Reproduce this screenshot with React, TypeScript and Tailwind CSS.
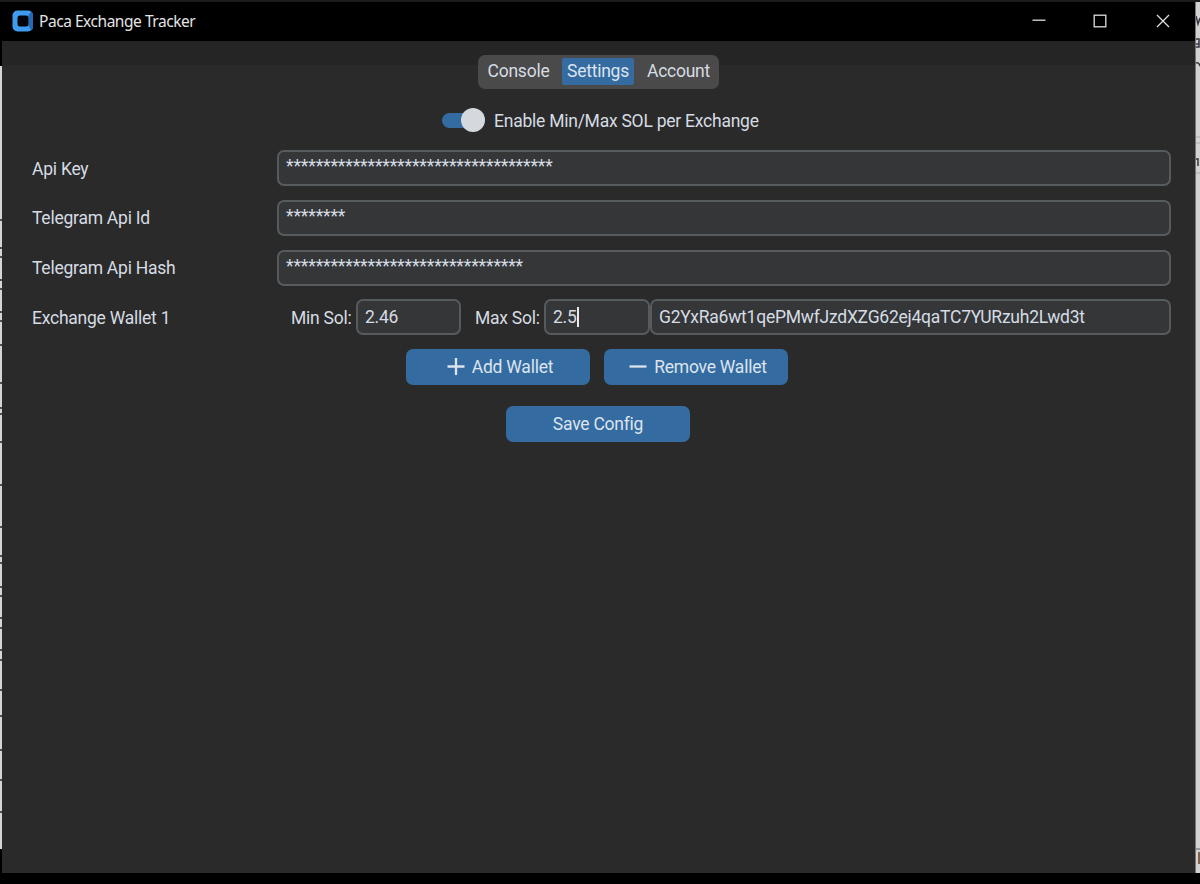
import { ReactNode } from "react";
import clsx from "clsx";

interface Field {
  label: string;
  value: string;
}

const tabs = [
  { name: "Console", width: "w-[80px] pl-px" },
  { name: "Settings", width: "ml-[4px] w-[72px]" },
  { name: "Account", width: "w-[88px] pl-px" },
];

const fields: Field[] = [
  { label: "Api Key", value: "*".repeat(36) },
  { label: "Telegram Api Id", value: "*".repeat(8) },
  { label: "Telegram Api Hash", value: "*".repeat(32) },
];

// y positions of the glyph edges of the document behind the window
const leftMarks = [219, 247, 256, 279, 288, 311, 320, 344, 382, 407, 413, 441, 484, 526, 555, 562, 586, 595, 617, 627, 649, 659, 689, 715, 749, 779, 811];

function Logo() {
  return (
    <svg width="22" height="22" viewBox="0 0 22 22" className="mb-[2px] ml-px shrink-0">
      <rect x="0.5" y="0.5" width="20.500" height="21" rx="5" fill="#3f9bee" />
      <path d="M16.500 5l3-3.500q1.500 1.500 1.500 3.500v12q0 2.500-1.500 3.500l-3-4.500z" fill="#2568b3" />
      <rect x="5.500" y="5.500" width="11" height="11" rx="2.500" fill="#02060b" />
    </svg>
  );
}

function TitleBar() {
  return (
    <header className="flex h-[39px] shrink-0 items-center bg-black pl-[9px]">
      <Logo />
      <h1 className="mb-[2px] ml-[5px] font-['Noto_Sans',sans-serif] text-[15.5px] leading-5 tracking-[-0.46px] text-[#e4e4e4]">
        Paca Exchange Tracker
      </h1>
      <svg width="140" height="16" viewBox="0 0 140 16" className="mb-[2px] ml-auto mr-[24px]" fill="none" stroke="#dedede" strokeWidth="1.300">
        <path d="M1.500 7.200h13" />
        <rect x="63.200" y="2.200" width="11.600" height="11.600" />
        <path d="M126 2l12 12M138 2L126 14" />
      </svg>
    </header>
  );
}

function Entry({ className, children }: { className?: string; children: ReactNode }) {
  return (
    <div className={clsx("flex h-9 items-center rounded-[7px] border-2 border-[#565b5e] bg-[#343638] pl-[7px]", className)}>
      {children}
    </div>
  );
}

function Button({ children }: { children: ReactNode }) {
  return (
    <button className="flex h-9 w-[184px] items-center justify-center rounded-[7px] bg-[#346ba1] text-[#dce4ee]">
      {children}
    </button>
  );
}

export default function App() {
  return (
    <div className="flex h-[884px] w-[1200px] flex-col overflow-hidden bg-black font-['Roboto',sans-serif] text-[17.500px] leading-5 tracking-[-0.240px] text-[#d6dce3]">
      <div className="h-[2px] shrink-0 bg-[#1c1c1c]" />
      <div className="flex h-[871px]">
        <div className="relative w-[2px] shrink-0 bg-black pt-[64px]">
          <div className="h-[783px] bg-[#d5d5d5]" />
          {leftMarks.map((y) => (
            <span key={y} className="absolute left-0 h-[2px] w-[2px] bg-[#4d5259]" style={{ top: y - 2 }} />
          ))}
        </div>

        <main className="flex w-[1193px] shrink-0 flex-col bg-[#2a2a2a]">
          <TitleBar />
          <div className="h-[24px] shrink-0 bg-[#252525]" />

          {/* Tab switcher straddles the darker strip */}
          <nav className="relative -mt-[10px] ml-[476px] flex h-[34px] w-[241px] items-center rounded-[7px] bg-[#4a4a4a]">
            {tabs.map((tab) => (
              <button
                key={tab.name}
                className={clsx(
                  "mb-px h-[27px] shrink-0 pb-px text-center",
                  tab.width,
                  tab.name === "Settings" && "rounded-[2px] bg-[#346ba1] text-[#dce4ee]",
                )}
              >
                {tab.name}
              </button>
            ))}
          </nav>

          <div className="ml-[440px] mt-[19px] flex h-6 items-center">
            <div className="flex h-[15px] w-[43px] items-center justify-end rounded-full bg-[#346ba1]">
              <span className="h-6 w-6 shrink-0 rounded-full bg-[#d5d9de]" />
            </div>
            <span className="ml-[9px] pt-px">Enable Min/Max SOL per Exchange</span>
          </div>

          <div className="mt-[18px] flex flex-col gap-[13.800px] pl-[30px] pr-[24px]">
            {fields.map((field) => (
              <div key={field.label} className="flex items-center">
                <label className="w-[245px] pt-px">{field.label}</label>
                <Entry className="flex-1">
                  <span className="mb-[4px] tracking-[-0.130px]">{field.value}</span>
                </Entry>
              </div>
            ))}
            <div className="flex items-center">
              <label className="w-[259px] pt-px">Exchange Wallet 1</label>
              <label className="w-[65px] pt-px">Min Sol:</label>
              <Entry className="w-[105px]">2.46</Entry>
              <label className="ml-[14px] w-[69px] pt-px">Max Sol:</label>
              <Entry className="w-[106px]">
                2.5
                <span className="h-5 w-[2px] bg-[#e8ebee]" />
              </Entry>
              <Entry className="flex-1">G2YxRa6wt1qePMwfJzdXZG62ej4qaTC7YURzuh2Lwd3t</Entry>
            </div>
          </div>

          <div className="ml-[404px] mt-[13.600px] flex gap-[14px]">
            <Button>
              <svg width="18" height="18" viewBox="0 0 18 18" className="ml-[4px] mr-[7px]" stroke="#dce4ee" strokeWidth="2.300">
                <path d="M.5 8.500h17M9 0v17" />
              </svg>
              Add Wallet
            </Button>
            <Button>
              <svg width="18" height="18" viewBox="0 0 18 18" className="ml-[4px] mr-[7px]" stroke="#dce4ee" strokeWidth="2.300">
                <path d="M.5 8.500h17" />
              </svg>
              Remove Wallet
            </Button>
          </div>
          <div className="ml-[504px] mt-[21px] flex">
            <Button>Save Config</Button>
          </div>
        </main>

        {/* Sliver of the document behind the window */}
        <aside className="flex w-[5px] shrink-0 flex-col overflow-hidden border-l border-[#777] bg-[#d2d2d2]">
          <svg width="4" height="870" viewBox="0 0 4 870" fill="none" stroke="#343842" strokeWidth="1.500">
            <path d="M0 14l2 8 2-6M0 37h3v8H0M0 42h3M0 61q3-1 4 3M0 157h2v7" />
            <path d="M0 135h4M0 141h4M0 171h4" stroke="#aaa" strokeWidth="1" />
            <path d="M0 847h4" stroke="#999" strokeWidth="2" />
            <path d="M3 850v12" stroke="#80624e" strokeWidth="2" />
          </svg>
        </aside>
      </div>
    </div>
  );
}
